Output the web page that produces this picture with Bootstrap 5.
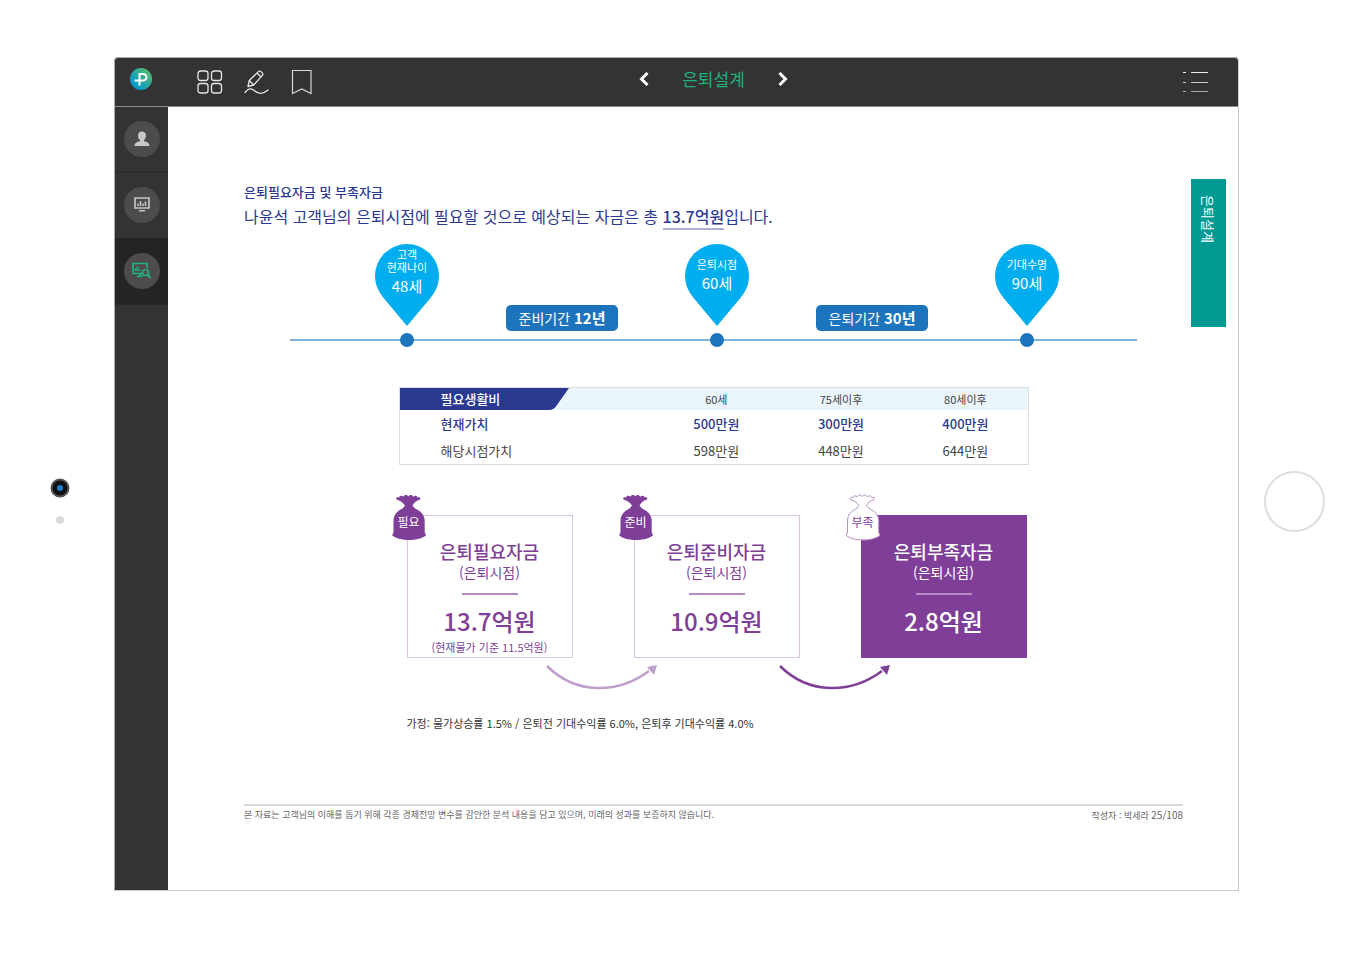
<!DOCTYPE html>
<html lang="ko">
<head>
<meta charset="utf-8">
<meta name="viewport" content="width=device-width, initial-scale=1">
<title>은퇴설계</title>
<link href="https://cdn.jsdelivr.net/npm/bootstrap@5.3.0/dist/css/bootstrap.min.css" rel="stylesheet">
<style>
:root{--navy:#2b3990;--blue:#1c75bc;--purple:#7f3f98;--dark:#333;--green:#22b07d}
body{font-family:"Noto Sans CJK KR",sans-serif;color:#444;background:#fff}
.tablet{min-height:100vh;display:grid;grid-template-columns:114px 1fr 113px}
.bezel{padding-top:40px;padding-right:2px}
.bezel-start{padding-left:8px}
.lens{width:20px;height:20px;margin-bottom:18px}
.sensor{width:8px;height:8px;background:#dcdcdc}
.home-btn{width:61px;height:61px;border:2px solid #ddd;background:#fff}
.screen{margin:57px 0 71px;border:1px solid #ccc;border-left-color:#aaa;border-top-color:#aaa;border-radius:4px 4px 0 0;overflow:hidden}
.topbar{height:49px;background:var(--dark);border-bottom:1px solid #8a8a8a;display:grid;grid-template-columns:1fr auto 1fr}
.topbar button,.rail button{background:none;border:0;padding:0;line-height:1}
.topbar svg,.rail svg,.pin svg,.bag svg,.hop{display:block}
.logo{width:52px;padding-bottom:6px}
.tools{gap:21px;margin-left:30px}
.pager{gap:30px;margin-right:-74px;padding-bottom:6px}
.pager-title{color:var(--green);font-size:17px;line-height:24px}
.menu-btn{margin-right:30px}
.rail{width:53px;background:var(--dark)}
.rail button{height:66px;width:53px;border-bottom:1px solid #292929;padding-bottom:2px}
.rail button.on{background:#242424}
.disc{width:36px;height:36px;background:#4c4c4c;margin:auto}
.sheet{padding:75px 55px 65px 76px;min-width:0}
.sheet h1{font-size:13px;line-height:20px;font-weight:500;color:var(--navy)}
.lead-line{font-size:16px;line-height:28px;color:var(--navy)}
.lead-line strong{font-weight:500;border-bottom:2px solid #a9b0d6}
.side-tab{top:72px;right:12px;width:35px;height:148px;background:#009a93;color:#fff;font-size:13px;line-height:35px;writing-mode:vertical-rl;text-orientation:sideways;padding-top:16px}
.timeline{width:100%;max-width:847px;margin-top:14px;padding:0 78px 0 85px;display:grid;grid-template-columns:64px 1fr 64px 1fr 64px}
.timeline::before{content:"";position:absolute;left:0;right:0;bottom:6px;height:2px;background:#7fb2dc}
.pin-text{padding-top:14px;color:#fff;font-size:11px;line-height:13px}
.pin-text.two{padding-top:4px}
.pin-text b{font-weight:400;font-size:15px;line-height:24px;display:block}
.stop{width:14px;height:14px;background:var(--blue);margin:7px auto 0}
.span-tag{background:var(--blue);border-radius:5px;color:#fff;font-size:14px;line-height:26px;padding:0 13px;margin-bottom:16px}
.span-tag b{font-size:15px}
.block{width:100%;max-width:630px}
.costs{margin-top:40px;border:1px solid #dcdde2;font-size:13px;table-layout:fixed}
.costs th,.costs td{padding:0;text-align:center;font-weight:400}
.costs th:first-child{text-align:left;padding-left:41px}
.costs thead th{height:22px;line-height:22px;background:#e9f4fb;font-size:11px}
.costs thead th:first-child{font-size:13px;font-weight:500;color:#fff}
.costs tbody tr{line-height:27px}
.costs .now>*{color:var(--navy);font-weight:500}
.costs .wide-col{width:255px}
.funds{margin-top:50px;padding:0 2px 0 8px}
.fund{width:166px;height:143px;border:1px solid #d9c5e0;color:var(--purple);padding-top:23px}
.fund.full{background:var(--purple);border-color:var(--purple);color:#fff}
.fund h2{font-size:18px;line-height:24px;font-weight:500;margin:0}
.fund .when{font-size:14px;line-height:18px}
.fund .bar{width:56px;height:2px;background:#b48cc3;margin:12px auto 11px}
.fund .sum{font-size:24px;line-height:30px;font-weight:500}
.fund .basis{font-size:11px;line-height:22px}
.bag{left:-17px;top:-23px;width:36px;height:48px}
.bag span{left:0;right:0;top:20px;font-size:12px;line-height:18px;color:#fff}
.full .bag span{color:var(--purple)}
.hop{left:137px;top:146px}
.note{font-size:11px;line-height:20px;margin-top:55px;padding-left:8px;color:#333}
.foot{border-top:2px solid #d9d9d9;font-size:9px;line-height:18px;color:#666}
.foot b{font-size:10px;font-weight:400}
</style>
</head>
<body>
<div class="tablet">
  <div class="bezel bezel-start d-flex flex-column align-items-center justify-content-center">
    <svg class="lens" viewBox="0 0 20 20"><circle cx="10" cy="10" r="8.5" fill="#111" stroke="#555" stroke-width="2"/><circle cx="10" cy="10" r="3" fill="#1c7cd0"/></svg>
    <div class="sensor rounded-circle"></div>
  </div>
  <div class="screen d-flex flex-column">
    <header class="topbar">
      <div class="d-flex align-items-center">
        <a class="logo d-flex justify-content-center" href="#" aria-label="홈">
          <svg width="22" height="22" viewBox="0 0 22 22"><defs><linearGradient id="lg" x1="1" y1="0" x2="0" y2="1"><stop offset=".2" stop-color="#4bb878"/><stop offset=".7" stop-color="#0f9dc0"/><stop offset="1" stop-color="#0a8fd0"/></linearGradient></defs><circle cx="11" cy="11" r="11" fill="url(#lg)"/><path d="M9.500 17.500V6h3.700a3.300 3.300 0 0 1 0 6.600H4.500" fill="none" stroke="#fff" stroke-width="2"/></svg>
        </a>
        <div class="tools d-flex align-items-center">
          <button type="button" aria-label="전체보기"><svg width="26" height="26" fill="none" stroke="#e6e6e6" stroke-width="1.3"><rect x="1" y="2" width="10" height="9.500" rx="2.500"/><rect x="14.500" y="2" width="10" height="9.500" rx="2.500"/><rect x="1" y="14.500" width="10" height="9.500" rx="2.500"/><rect x="14.500" y="14.500" width="10" height="9.500" rx="2.500"/></svg></button>
          <button type="button" aria-label="필기"><svg width="26" height="26" fill="none" stroke="#e6e6e6" stroke-width="1.300" stroke-linejoin="round" stroke-linecap="round"><path d="M4 17.500 5.200 11.500 14.500 2.600q1.200-1 2.300 0l1.600 1.500q1 1.200 0 2.300L9.700 16ZM5.200 11.500 9.700 16M13 4l4 4M1 23.500c3-4 6-5 9.500-1.800s8 4 13.500-.7"/></svg></button>
          <button type="button" aria-label="책갈피"><svg width="22" height="26" fill="none" stroke="#d6d6d6" stroke-width="1.200"><path d="M1.500 1.500h18.500v23L10.800 20 1.500 24.500Z"/></svg></button>
        </div>
      </div>
      <div class="pager d-flex align-items-center">
        <button type="button" aria-label="이전"><svg width="14" height="14" fill="none" stroke="#fff" stroke-width="3"><path d="M9.500 1 3.500 7l6 6"/></svg></button>
        <span class="pager-title">은퇴설계</span>
        <button type="button" aria-label="다음"><svg width="14" height="14" fill="none" stroke="#fff" stroke-width="3"><path d="m4.500 1 6 6-6 6"/></svg></button>
      </div>
      <div class="d-flex align-items-center justify-content-end">
        <button class="menu-btn" type="button" aria-label="목차"><svg width="26" height="22"><path d="M1 1.500h3M9 1.500h17" stroke="#eee"/><path d="M1 11.500h3M9 11.500h17" stroke="#ccc"/><path d="M1 20.500h3M9 20.500h17" stroke="#aaa"/></svg></button>
      </div>
    </header>
    <div class="d-flex flex-grow-1">
      <nav class="rail d-flex flex-column flex-shrink-0" aria-label="메뉴">
        <button type="button" aria-label="고객"><span class="disc rounded-circle d-flex align-items-center justify-content-center"><svg width="16" height="16" fill="#c9c9c9"><path d="M8 .5c2.600 0 4 1.700 4 4.200 0 1.800-.8 3.300-2 4.300v1.200c3 .6 5.500 1.800 5.500 4.800H.5c0-3 2.500-4.200 5.500-4.800V9C4.800 8 4 6.500 4 4.700 4 2.200 5.400.5 8 .5Z"/></svg></span></button>
        <button type="button" aria-label="분석"><span class="disc rounded-circle d-flex align-items-center justify-content-center"><svg width="16" height="15"><path d="M1 1h14v10H1Z" fill="none" stroke="#c4c4c4" stroke-width="1.700"/><path d="M4 9V6.500M6.500 9V4M9 9V6.500M11.500 9V4.500M5 13.800h6" stroke="#c4c4c4" stroke-width="1.600"/></svg></span></button>
        <button class="on" type="button" aria-label="은퇴설계"><span class="disc rounded-circle d-flex align-items-center justify-content-center"><svg width="19" height="17" fill="none" stroke="#22b07d" stroke-width="1.700"><path d="M10 11.500H1V1.500h14V6M3.500 9V6.500M5.500 9V4.500M7.500 9V7.500M5 14.500h5.500M8 11v3"/><circle cx="13.500" cy="10.500" r="3"/><path d="m15.500 12.500 3 3.500" stroke-width="2"/></svg></span></button>
      </nav>
      <main class="sheet position-relative flex-grow-1 d-flex flex-column">
        <h1 class="m-0">은퇴필요자금 및 부족자금</h1>
        <p class="lead-line m-0">나윤석 고객님의 은퇴시점에 필요할 것으로 예상되는 자금은 총 <strong>13.7억원</strong>입니다.</p>
        <div class="side-tab position-absolute">은퇴설계</div>

        <section class="timeline position-relative mx-auto">
          <div class="position-relative">
            <div class="pin position-relative"><svg width="64" height="82"><path d="M32 82 9 54.500C3 47 0 40 0 32a32 32 0 0 1 64 0c0 8-3 15-9 22.500Z" fill="#00aeef"/></svg><div class="pin-text two position-absolute top-0 start-0 w-100 text-center">고객<br>현재나이<b>48세</b></div></div>
            <div class="stop rounded-circle"></div>
          </div>
          <div class="d-flex align-items-end justify-content-center"><div class="span-tag">준비기간 <b>12년</b></div></div>
          <div class="position-relative">
            <div class="pin position-relative"><svg width="64" height="82"><path d="M32 82 9 54.500C3 47 0 40 0 32a32 32 0 0 1 64 0c0 8-3 15-9 22.500Z" fill="#00aeef"/></svg><div class="pin-text position-absolute top-0 start-0 w-100 text-center">은퇴시점<b>60세</b></div></div>
            <div class="stop rounded-circle"></div>
          </div>
          <div class="d-flex align-items-end justify-content-center"><div class="span-tag">은퇴기간 <b>30년</b></div></div>
          <div class="position-relative">
            <div class="pin position-relative"><svg width="64" height="82"><path d="M32 82 9 54.500C3 47 0 40 0 32a32 32 0 0 1 64 0c0 8-3 15-9 22.500Z" fill="#00aeef"/></svg><div class="pin-text position-absolute top-0 start-0 w-100 text-center">기대수명<b>90세</b></div></div>
            <div class="stop rounded-circle"></div>
          </div>
        </section>

        <table class="costs block mx-auto">
          <colgroup><col class="wide-col"><col><col><col></colgroup>
          <thead><tr><th class="position-relative" scope="col"><svg class="position-absolute top-0 start-0" width="170" height="22"><path d="M0 0h169l-12 17q-3 5-8 5H0Z" fill="#2b3990"/></svg><span class="position-relative">필요생활비</span></th><th scope="col">60세</th><th scope="col">75세이후</th><th scope="col">80세이후</th></tr></thead>
          <tbody>
            <tr class="now"><th scope="row">현재가치</th><td>500만원</td><td>300만원</td><td>400만원</td></tr>
            <tr><th scope="row">해당시점가치</th><td>598만원</td><td>448만원</td><td>644만원</td></tr>
          </tbody>
        </table>

        <section class="funds block mx-auto d-flex justify-content-between text-center">
          <article class="fund position-relative">
            <div class="bag position-absolute"><svg width="36" height="48" fill="#7f3f98"><path id="sack" d="M14 12.500C12 9.500 9 7.500 5.500 6.500 4.500 5 6 3.800 8 4.500 8.500 2.500 11 2.300 12.200 3.800 13.500 1.500 16 1.500 17.300 3.500 18.800 1.500 21 1.700 22.300 3.800 24 2.200 26 2.500 26.700 4.500 28.700 3.500 30 4.800 29 6.500 25.500 7.500 23 9.500 21.500 12.500L24 15.500C29.500 18 33.500 21.500 33.700 27.500V39L35 42.500C27 48.500 9 48.500 1.200 42.500L2.500 39V27.500C2.700 21.500 6.500 18 11.500 15.500Z"/></svg><span class="position-absolute">필요</span></div>
            <h2>은퇴필요자금</h2><div class="when">(은퇴시점)</div><div class="bar"></div><div class="sum">13.7억원</div><div class="basis">(현재물가 기준 11.5억원)</div>
            <svg class="hop position-absolute" width="114" height="30"><path d="M2 4C31 33 73 32 104 9" fill="none" stroke="#bf9fcc" stroke-width="2.500"/><path d="m112 3-3 10-7-8Z" fill="#bf9fcc"/></svg>
          </article>
          <article class="fund position-relative">
            <div class="bag position-absolute"><svg width="36" height="48" fill="#7f3f98"><use href="#sack"/></svg><span class="position-absolute">준비</span></div>
            <h2>은퇴준비자금</h2><div class="when">(은퇴시점)</div><div class="bar"></div><div class="sum">10.9억원</div>
            <svg class="hop position-absolute" width="120" height="30"><path d="M8 4C37 33 79 32 110 9" fill="none" stroke="#7f3f98" stroke-width="2.500"/><path d="m118 3-3 10-7-8Z" fill="#7f3f98"/></svg>
          </article>
          <article class="fund full position-relative">
            <div class="bag position-absolute"><svg width="36" height="48" fill="#fff" stroke="#b48cc3"><use href="#sack"/></svg><span class="position-absolute">부족</span></div>
            <h2>은퇴부족자금</h2><div class="when">(은퇴시점)</div><div class="bar"></div><div class="sum">2.8억원</div>
          </article>
        </section>
        <p class="note block mx-auto mb-0">가정: 물가상승률 1.5% / 은퇴전 기대수익률 6.0%, 은퇴후 기대수익률 4.0%</p>

        <footer class="foot mt-auto d-flex justify-content-between">
          <span>본 자료는 고객님의 이해를 돕기 위해 각종 경제전망 변수를 감안한 분석 내용을 담고 있으며, 미래의 성과를 보증하지 않습니다.</span>
          <span>작성자 : 박세라 <b>25/108</b></span>
        </footer>
      </main>
    </div>
  </div>
  <div class="bezel d-flex align-items-center justify-content-center">
    <button class="home-btn rounded-circle" type="button" aria-label="홈 버튼"></button>
  </div>
</div>
<script src="https://cdn.jsdelivr.net/npm/bootstrap@5.3.0/dist/js/bootstrap.bundle.min.js"></script>
</body>
</html>
